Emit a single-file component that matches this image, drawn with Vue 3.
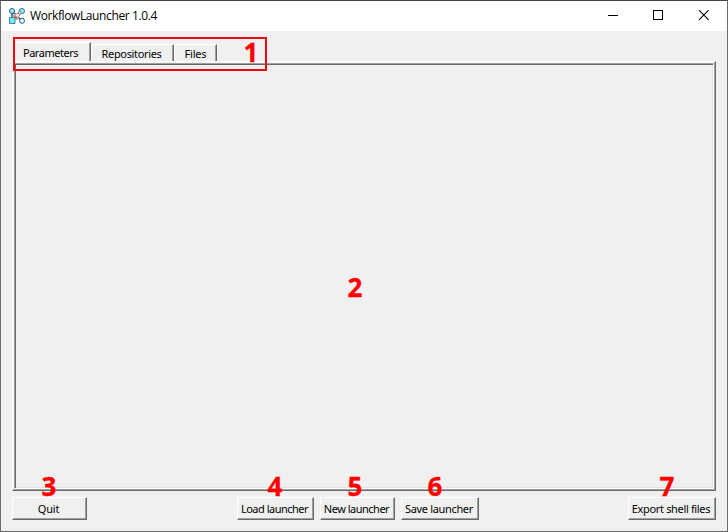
<script setup>
const tabs = [
  { label: 'Parameters', cls: 'active' },
  { label: 'Repositories', cls: 'repositories' },
  { label: 'Files', cls: 'files' },
]
const marks = [1, 2, 3, 4, 5, 6, 7]
</script>

<template>
  <div class="window">
    <header class="titlebar">
      <svg class="logo" width="16" height="16" viewBox="0 0 16 16">
        <path d="M3 3L13 13M3 13L13 3M3 3V13" stroke="#2f648e" stroke-width="1.6" fill="none" />
        <circle cx="3" cy="3" r="2.5" fill="#a5f0f5" stroke="#1f5f92" />
        <circle cx="12.8" cy="3.1" r="2.7" fill="#8beaf2" stroke="#3476a3" />
        <path d="M.5 9.5h5.5v6H.5z" fill="#75edf2" stroke="#3b87a8" />
        <circle cx="13" cy="12.8" r="2.5" fill="#e9fbff" stroke="#1f5f92" />
        <path d="M3.8 7.5L6.8 6 11.5 3 12 4 10 8.7 7.8 12 6.8 9.5Z" fill="#eee4df" stroke="#75747d" stroke-width=".7" />
        <path d="M6.2 7l2.6 2.6-2 1.1-1.8-2z" fill="#d9643f" />
        <path d="M9 5l1.8 1.6" stroke="#c8523f" />
      </svg>
      <span class="title">WorkflowLauncher 1.0.4</span>
      <svg class="controls" width="102" height="12" viewBox="0 0 102 12" fill="none" stroke="#000">
        <path d="M0 5.5h10M45.5 .5h9v9h-9z" shape-rendering="crispEdges" />
        <path d="M91 .2l9.6 9.6M100.6 .2L91 9.8" stroke-width="1.1" />
      </svg>
    </header>
    <main class="body">
      <nav class="tabs">
        <div v-for="t in tabs" :key="t.label" class="tab" :class="t.cls"><span>{{ t.label }}</span></div>
      </nav>
      <section class="panel"><div class="inner"></div></section>
      <footer class="actions">
        <button class="quit"><span>Quit</span></button>
        <div class="group">
          <button class="load"><span>Load launcher</span></button>
          <button class="new"><span>New launcher</span></button>
          <button class="save"><span>Save launcher</span></button>
        </div>
        <button class="export"><span>Export shell files</span></button>
      </footer>
    </main>
    <div class="outline"></div>
    <b v-for="n in marks" :key="n" class="mark" :class="'m' + n">{{ n }}</b>
  </div>
</template>

<style>
body { margin: 0; overflow: hidden; }
</style>
<style scoped>
* { box-sizing: border-box; }
.window { position: relative; width: 728px; height: 532px; display: flex; flex-direction: column; background: #f0f0f0; border: 1px solid #6b6b6b; border-top-color: #493f3d; font-family: "Noto Sans", sans-serif; color: #000; }
.titlebar { height: 30px; flex: none; display: flex; align-items: center; background: #fff; padding: 0 18px 0 8px; }
.logo { flex: none; margin-top: -1px; }
.title { margin-left: 5px; font: 12px/16px "Open Sans", sans-serif; letter-spacing: -.39px; white-space: nowrap; }
.controls { margin-left: auto; margin-right: -1px; }
.body { flex: 1; display: flex; flex-direction: column; padding: 12px 11px 11px; }
.tabs { height: 18px; display: flex; align-items: flex-end; }
.tab { height: 17px; display: flex; align-items: center; justify-content: center; border-top: 1px solid #fff; border-left: 1px solid #fff; border-right: 1px solid #696969; box-shadow: inset -1px 0 #a0a0a0; font-size: 11px; line-height: 15px; white-space: nowrap; }
.active { width: 78px; height: 19px; margin-left: 1px; padding: 1px 3px 0 0; letter-spacing: -.48px; }
.repositories { width: 83px; padding-right: 2px; letter-spacing: -.35px; }
.files { width: 43px; letter-spacing: -.2px; }
.panel { height: 430px; border: 1px solid; border-color: #fff #696969 #696969 #fff; box-shadow: inset -1px -1px #a0a0a0, inset 1px 1px #f5f5f5; padding: 1px; display: flex; }
.inner { flex: 1; border: 1px solid; border-color: #a0a0a0 #fff #fff #a0a0a0; box-shadow: inset 1px 1px #696969, inset -1px -1px #e3e3e3; }
.actions { display: flex; align-items: center; margin-top: 6px; height: 23px; }
button { appearance: none; display: flex; align-items: center; justify-content: center; height: 23px; padding: 0 2px 0 0; margin: 0; border: 1px solid; border-color: #fff #696969 #696969 #fff; border-radius: 0; box-shadow: inset -1px -1px #a0a0a0; background: #f0f0f0; color: #000; font: 11px/15px "Noto Sans", sans-serif; white-space: nowrap; }
button span { height: 15px; }
.quit { width: 75px; letter-spacing: -.2px; }
.group { display: flex; gap: 6px; margin-left: 150px; }
.load { width: 77px; letter-spacing: -.5px; }
.new { width: 75px; letter-spacing: -.5px; }
.save { width: 78px; letter-spacing: -.34px; }
.export { width: 88px; margin-left: auto; letter-spacing: -.34px; }
.outline { position: absolute; left: 12px; top: 36px; width: 254px; height: 34px; border: 2px solid #f00; }
.mark { position: absolute; width: 20px; text-align: center; color: #f00; font: 700 26px/30px "Open Sans", sans-serif; -webkit-text-stroke: .3px #f00; }
.m1 { left: 240px; top: 36px; }
.m2 { left: 344px; top: 271px; }
.m3 { left: 38px; top: 470px; }
.m4 { left: 264px; top: 470px; }
.m5 { left: 344px; top: 470px; }
.m6 { left: 424px; top: 470px; }
.m7 { left: 656px; top: 470px; }
</style>
